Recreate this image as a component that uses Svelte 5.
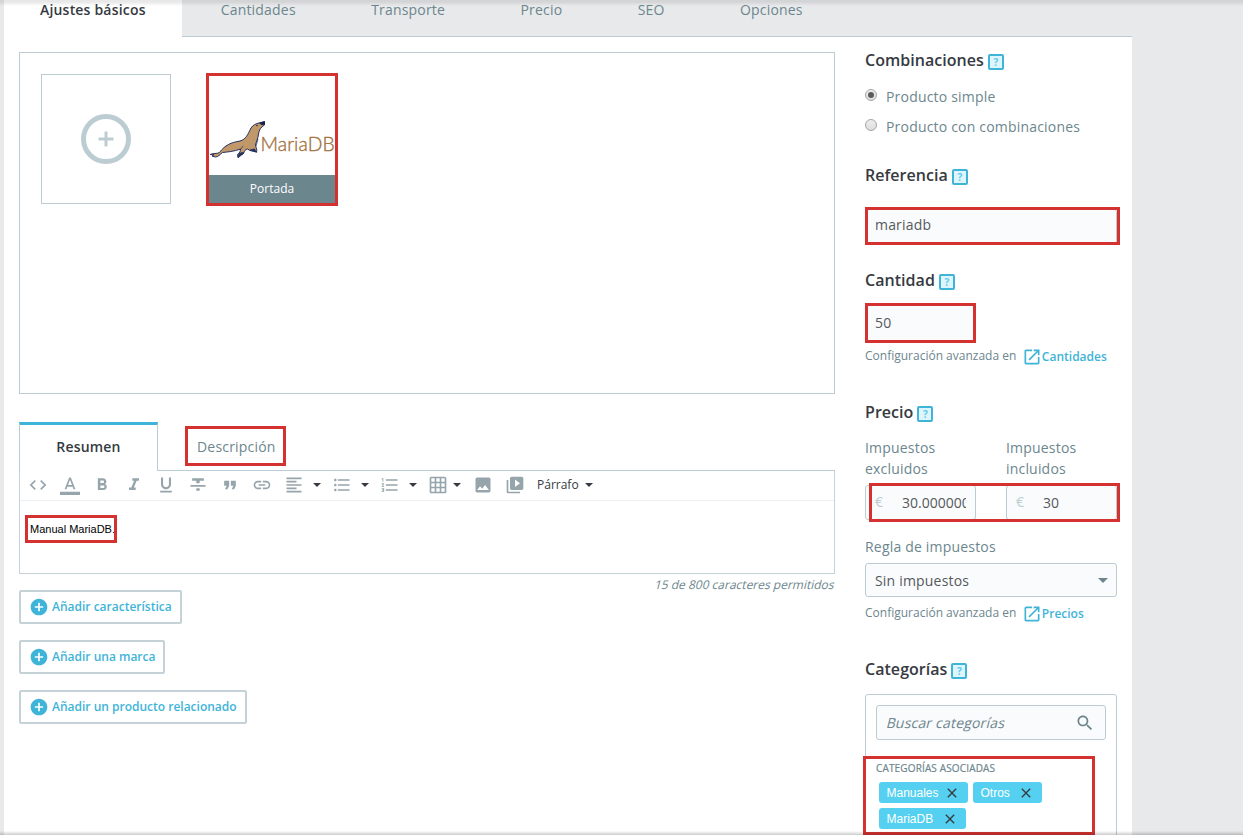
<script>
  const tabs = ['Ajustes básicos', 'Cantidades', 'Transporte', 'Precio', 'SEO', 'Opciones'];
  const tools = [
    { d: 'M9.4 16.6L4.8 12l4.6-4.6L8 6l-6 6 6 6 1.4-1.4zm5.2 0l4.6-4.6-4.6-4.6L16 6l6 6-6 6-1.4-1.4z' },
    { d: 'M0 20h24v4H0zM11 3L5.5 17h2.25l1.12-3h6.25l1.12 3h2.25L13 3h-2zm-1.38 9L12 5.67 14.38 12H9.62z' },
    { d: 'M15.6 10.79c.97-.67 1.65-1.77 1.65-2.79 0-2.26-1.75-4-4-4H7v14h7.04c2.09 0 3.71-1.7 3.71-3.79 0-1.52-.86-2.82-2.15-3.42zM10 6.5h3c.83 0 1.5.67 1.5 1.5s-.67 1.5-1.5 1.5h-3v-3zm3.5 9H10v-3h3.5c.83 0 1.5.67 1.5 1.5s-.67 1.5-1.5 1.5z' },
    { d: 'M10 4v3h2.21l-3.42 8H6v3h8v-3h-2.21l3.42-8H18V4z' },
    { d: 'M12 17c3.31 0 6-2.69 6-6V3h-2.5v8c0 1.93-1.57 3.5-3.5 3.5S8.5 12.93 8.5 11V3H6v8c0 3.31 2.69 6 6 6zm-7 2v2h14v-2H5z' },
    { d: 'M10 19h4v-3h-4v3zM5 4v3h5v3h4V7h5V4H5zM3 14h18v-2H3v2z' },
    { d: 'M6 17h3l2-4V7H5v6h3zm8 0h3l2-4V7h-6v6h3z' },
    { d: 'M3.9 12c0-1.71 1.39-3.1 3.1-3.1h4V7H7c-2.76 0-5 2.24-5 5s2.24 5 5 5h4v-1.9H7c-1.71 0-3.1-1.39-3.1-3.1zM8 13h8v-2H8v2zm9-6h-4v1.9h4c1.71 0 3.1 1.39 3.1 3.1s-1.39 3.1-3.1 3.1h-4V17h4c2.76 0 5-2.24 5-5s-2.24-5-5-5z' },
    { d: 'M15 15H3v2h12v-2zm0-8H3v2h12V7zM3 13h18v-2H3v2zm0 8h18v-2H3v2zM3 3v2h18V3H3z', w: 48 },
    { d: 'M4 10.5c-.83 0-1.5.67-1.5 1.5s.67 1.5 1.5 1.5 1.5-.67 1.5-1.5-.67-1.5-1.5-1.5zm0-6c-.83 0-1.5.67-1.5 1.5S3.17 7.5 4 7.5 5.5 6.83 5.5 6 4.83 4.5 4 4.5zm0 12c-.83 0-1.5.68-1.5 1.5s.68 1.5 1.5 1.5 1.5-.68 1.5-1.5-.67-1.5-1.5-1.5zM7 19h14v-2H7v2zm0-6h14v-2H7v2zm0-8v2h14V5H7z', w: 48 },
    { d: 'M2 17h2v.5H3v1h1v.5H2v1h3v-4H2v1zm1-9h1V4H2v1h1v3zm-1 3h1.8L2 13.1v.9h3v-1H3.2L5 10.9V10H2v1zm5-6v2h14V5H7zm0 14h14v-2H7v2zm0-6h14v-2H7v2z', w: 48 },
    { d: 'M20 2H4c-1.1 0-2 .9-2 2v16c0 1.1.9 2 2 2h16c1.1 0 2-.9 2-2V4c0-1.1-.9-2-2-2zM8 20H4v-4h4v4zm0-6H4v-4h4v4zm0-6H4V4h4v4zm6 12h-4v-4h4v4zm0-6h-4v-4h4v4zm0-6h-4V4h4v4zm6 12h-4v-4h4v4zm0-6h-4v-4h4v4zm0-6h-4V4h4v4z', w: 45 },
    { d: 'M21 19V5c0-1.1-.9-2-2-2H5c-1.1 0-2 .9-2 2v14c0 1.1.9 2 2 2h14c1.1 0 2-.9 2-2zM8.5 13.5l2.5 3.01L14.5 12l4.5 6H5l3.5-4.5z' },
    { d: 'M4 6H2v14c0 1.1.9 2 2 2h14v-2H4V6zm16-4H8c-1.1 0-2 .9-2 2v12c0 1.1.9 2 2 2h12c1.1 0 2-.9 2-2V4c0-1.1-.9-2-2-2zm-8 12.5v-9l6 4.5-6 4.5z' }
  ];
  const actions = ['Añadir característica', 'Añadir una marca', 'Añadir un producto relacionado'];
  const tags = [
    { name: 'Manuales', w: 89 },
    { name: 'Otros', w: 69 },
    { name: 'MariaDB', w: 87 }
  ];
</script>

{#snippet heading(text)}
  <h2>{text}<span class="help">?</span></h2>
{/snippet}

{#snippet advanced(target)}
  <p class="advanced">
    Configuración avanzada en
    <a href="#top"
      ><svg viewBox="0 0 24 24"
        ><path
          d="M19 19H5V5h7V3H5c-1.11 0-2 .9-2 2v14c0 1.1.89 2 2 2h14c1.1 0 2-.9 2-2v-7h-2v7zM14 3v2h3.59l-9.83 9.83 1.41 1.41L19 6.41V10h2V3h-7z"
        /></svg
      >{target}</a>
  </p>
{/snippet}

<div class="page">
  <nav class="tabs">
    {#each tabs as tab, i}
      <div class="tab" class:active={i === 0}>{tab}</div>
    {/each}
  </nav>

  <div class="panel">
    <main>
      <section class="gallery">
        <div class="add-image"><div class="ring"><svg viewBox="0 0 16 16"><path d="M6.5.5h3v6h6v3h-6v6h-3v-6h-6v-3h6z" /></svg></div></div>
        <div class="cover">
          <svg class="logo" viewBox="0 0 126 99">
            <path
              d="M1 78.5C4 77 8 78 10.5 76.5C16 69 22 66.5 31 65C37 63.5 39 58 42 52C44 49 47 47.5 50 47L55.5 45.5L55.5 49C52 51 50 54 49.5 58C49 63 47 66 46.5 69C47 72 48.5 74 47.5 76L41 74.5L38.5 73C36 73.5 35.5 75 34.5 77.5C32.5 78.5 30.5 80 29 81.5L28.5 78.5C31 77 31.5 74.5 31.5 73C25 75.5 18 76 13.5 76.5C11 78.5 9 81 6.5 81L3 80L5 78.8Z"
              fill="#c0986a"
              stroke="#26305f"
              stroke-width="1"
              stroke-linejoin="round"
            />
            <path d="M50 47l5.8-1.8v3.2l-2.8.8z" fill="#15204c" />
            <path d="M35 77l-6 4.8 1-4 3-1.5zM41 74l6.8 2.3-2.5-3.5zM31 74l3.2-4M47 70l2-7" fill="#26305f" stroke="#26305f" stroke-width=".7" />
            <circle cx="48" cy="49.5" r=".8" fill="#1a224a" />
            <text x="51.5" y="75">MariaDB</text>
          </svg>
          <div class="caption">Portada</div>
          <i class="mark mark-cover"></i>
        </div>
      </section>

      <div class="editor-tabs">
        <div class="etab on">Resumen</div>
        <div class="etab">Descripción<i class="mark mark-desc"></i></div>
      </div>
      <section class="editor">
        <div class="toolbar">
          {#each tools as tool}
            <div class="tool" style="width: {tool.w ?? 32}px">
              <svg viewBox="0 0 24 24"><path d={tool.d} /></svg>
              {#if tool.w}<b class="caret" class:tight={tool.w === 45}></b>{/if}
            </div>
          {/each}
          <div class="format">Párrafo<b class="caret"></b></div>
        </div>
        <div class="content"><span>Manual MariaDB.<i class="mark mark-text"></i></span></div>
      </section>
      <p class="counter"><span class="slant">15 de 800 caracteres permitidos</span></p>

      <div class="actions">
        {#each actions as action}
          <button
            ><svg viewBox="0 0 24 24"
              ><path d="M12 2C6.48 2 2 6.48 2 12s4.48 10 10 10 10-4.48 10-10S17.52 2 12 2zm5 11h-4v4h-2v-4H7v-2h4V7h2v4h4v2z" /></svg
            >{action}</button>
        {/each}
      </div>
    </main>

    <aside>
      {@render heading('Combinaciones')}
      <div class="radio first"><span class="dot checked"></span>Producto simple</div>
      <div class="radio"><span class="dot"></span>Producto con combinaciones</div>

      <div class="group reference">
        {@render heading('Referencia')}
        <div class="field">mariadb<i class="mark mark-ref"></i></div>
      </div>

      <div class="group quantity">
        {@render heading('Cantidad')}
        <div class="field small">50<i class="mark mark-qty"></i></div>
        {@render advanced('Cantidades')}
      </div>

      <div class="group price">
        {@render heading('Precio')}
        <div class="prices">
          <div><label for="net">Impuestos excluidos</label><div class="money" id="net"><em>€</em><span>30.000000</span></div></div>
          <div><label for="gross">Impuestos incluidos</label><div class="money" id="gross"><em>€</em><span>30</span></div></div>
          <i class="mark mark-price"></i>
        </div>
        <div class="rule">Regla de impuestos</div>
        <div class="field select">Sin impuestos<b class="caret"></b></div>
        {@render advanced('Precios')}
      </div>

      <div class="group categories">
        {@render heading('Categorías')}
        <div class="catbox">
          <div class="search">
            <span class="slant">Buscar categorías</span>
            <svg viewBox="0 0 24 24"><path d="M15.5 14h-.79l-.28-.27C15.41 12.59 16 11.11 16 9.5 16 5.91 13.09 3 9.5 3S3 5.91 3 9.5 5.91 16 9.5 16c1.61 0 3.09-.59 4.23-1.57l.27.28v.79l5 4.99L20.49 19l-4.99-5zm-6 0C7.01 14 5 11.99 5 9.5S7.01 5 9.5 5 14 7.01 14 9.5 11.99 14 9.5 14z" /></svg>
          </div>
          <div class="assoc">CATEGORÍAS ASOCIADAS</div>
          <div class="tags">
            {#each tags as tag}
              <span class="tag" style="width: {tag.w}px"
                >{tag.name}<svg viewBox="0 0 24 24"
                  ><path d="M19 6.41L17.59 5 12 10.59 6.41 5 5 6.41 10.59 12 5 17.59 6.41 19 12 13.41 17.59 19 19 17.59 13.41 12z" /></svg
                ></span>
            {/each}
          </div>
          <i class="mark mark-cat"></i>
        </div>
      </div>
    </aside>
  </div>
  <div class="shade top"></div>
  <div class="shade bottom"></div>
</div>

<style>
  :global(body) { margin: 0; background: #e8e9eb; overflow: hidden; }
  .page, .page * { box-sizing: border-box; }
  .page {
    position: relative; width: 1243px; height: 835px; padding-left: 4px; overflow: hidden;
    background: #e8e9eb; color: #6c868e; font: 14px/21px "Open Sans", "Noto Sans", sans-serif; letter-spacing: .19px;
  }
  .mark { position: absolute; border: 3px solid #d33231; pointer-events: none; z-index: 2; }
  svg { display: block; fill: currentColor; }
  p, h2 { margin: 0; }
  .slant { display: inline-block; transform: skewX(-14deg); }
  .tabs { display: flex; width: 1128px; height: 37px; border-bottom: 1px solid #bbcdd2; }
  .tab { height: 36px; padding: 0 37.7px; line-height: 20px; }
  .tab.active { width: 178px; height: 37px; padding: 0 0 0 36px; margin-right: 1px; background: #fff; color: #363a41; font-weight: 600; white-space: nowrap; }
  .panel { display: flex; width: 1128px; height: 798px; padding: 0 15px; background: #fff; }
  main { width: 816px; margin-right: 30px; padding-top: 15px; flex: none; }
  .gallery { display: flex; gap: 35px; height: 342px; border: 1px solid #bbcdd2; padding: 21px; }
  .add-image { display: flex; align-items: center; justify-content: center; width: 130px; height: 130px; border: 1px solid #bbcdd2; }
  .ring { display: flex; align-items: center; justify-content: center; width: 50px; height: 50px; border: 5px solid #bbcdd2; border-radius: 50%; color: #bbcdd2; }
  .ring svg { width: 16px; height: 16px; }
  .cover { position: relative; width: 132px; height: 132px; padding: 2px 3px 3px; }
  .logo { width: 126px; height: 99px; overflow: hidden; }
  .logo text { font: 300 19.3px "Lato", sans-serif; fill: #a1703c; stroke: #a1703c; stroke-width: .35px; letter-spacing: .1px; }
  .caption { height: 28px; background: #6c868e; color: #fff; font-size: 12px; line-height: 27px; text-align: center; letter-spacing: 0; }
  .mark-cover { inset: -1px 0 0; }
  .editor-tabs { display: flex; height: 49px; margin-top: 28px; }
  .etab { position: relative; padding: 0 0 0 39px; line-height: 50px; border-bottom: 1px solid #bbcdd2; flex: 1; }
  .etab.on { flex: none; width: 139px; padding: 0; border: 1px solid #bbcdd2; border-width: 3px 1px 0; border-top-color: #3eb4d8; color: #363a41; font-weight: 600; text-align: center; line-height: 44px; }
  .mark-desc { left: 27px; top: 4px; width: 101px; height: 40px; }
  .editor { height: 103px; border: 1px solid #c5d2d8; border-top: 0; }
  .toolbar { display: flex; align-items: center; height: 30px; padding: 0 0 1px 8px; border-bottom: 1px solid #eceeef; color: #95a5ab; }
  .tool { display: flex; align-items: center; }
  .tool svg { width: 20px; height: 20px; flex: none; margin-top: -1px; }
  .caret { width: 0; height: 0; margin-left: 9px; border: 4px solid transparent; border-top-color: #363a41; border-bottom: 0; }
  .caret.tight { margin-left: 5px; }
  .format { display: flex; align-items: center; color: #363a41; font-size: 12px; letter-spacing: 0; margin-top: -1px; }
  .format .caret { margin-left: 6px; }
  .content { padding: 21px 0 0 10px; color: #000; font: 11px/14px "Liberation Sans", Arial, sans-serif; letter-spacing: 0; }
  .content span { position: relative; display: inline-block; }
  .mark-text { left: -5px; top: -7px; width: 92px; height: 28px; }
  .counter { height: 17px; text-align: right; font-size: 12px; line-height: 17px; margin-top: 2px; letter-spacing: 0; }
  .actions { display: flex; flex-direction: column; align-items: flex-start; gap: 16px; margin-top: -3px; }
  button { display: flex; align-items: center; height: 34px; padding: 0 8px 0 9px; border: 2px solid #c5d3d9; border-radius: 2px; background: #fff; color: #3eb4d8; font: 600 12px/18px "Open Sans", sans-serif; white-space: nowrap; }
  button svg { width: 20px; height: 20px; margin: 0 3px 0 -1px; }
  aside { width: 252px; flex: none; padding-top: 12px; }
  h2 { display: flex; height: 22px; align-items: center; color: #363a41; font-size: 16px; line-height: 22px; font-weight: 600; letter-spacing: .04px; }
  .help { width: 16px; height: 16px; margin: 4px 0 0 4px; border: 2px solid #3eb4d8; border-radius: 2px; background: #dff5fc; color: #5bcdee; font-size: 10px; line-height: 12px; text-align: center; font-weight: 700; }
  .radio { display: flex; align-items: center; height: 30px; }
  .radio.first { margin-top: 10px; }
  .dot { display: flex; align-items: center; justify-content: center; width: 12px; height: 12px; margin: -3px 9px 0 0; border: 1px solid #a5a5a5; border-radius: 50%; background: linear-gradient(#eee, #ddd); }
  .dot.checked::after { content: ''; width: 6px; height: 6px; border-radius: 50%; background: #5b5b5b; }
  .field { position: relative; height: 35px; padding-left: 9px; border: 1px solid #bbcdd2; border-radius: 3px; background: #fafbfc; color: #55595c; line-height: 30px; }
  .reference { margin-top: 23px; }
  .reference .field { margin-top: 23px; }
  .mark-ref { left: -1px; top: -3px; width: 255px; height: 38px; }
  .quantity { margin-top: 25px; }
  .quantity .field { margin-top: 14px; }
  .small { width: 110px; height: 36px; line-height: 34px; }
  .mark-qty { left: -1px; top: -3px; width: 111px; height: 40px; }
  .advanced { display: flex; align-items: center; height: 18px; margin-top: 6px; font-size: 12px; line-height: 18px; white-space: nowrap; letter-spacing: 0; }
  .advanced a { display: flex; align-items: center; margin: 1px 0 0 6px; color: #3eb4d8; font-weight: 600; text-decoration: none; }
  .advanced svg { width: 20px; height: 20px; margin: 1px -.5px 0 0; }
  .price { margin-top: 36px; }
  .prices { position: relative; display: flex; gap: 30px; margin-top: 14px; }
  .prices > div { width: 111px; }
  .prices label { display: block; height: 42px; width: 90px; }
  .money { display: flex; height: 35px; margin-top: 6px; border: 1px solid #bbcdd2; border-radius: 3px; background: #fafbfc; color: #55595c; line-height: 34px; }
  .money em { width: 36px; padding-left: 9px; color: #bbcdd2; font-style: normal; line-height: 32px; }
  .money span { width: 64px; overflow: hidden; letter-spacing: 0; }
  .mark-price { left: 4px; bottom: -2px; width: 251px; height: 39px; }
  .rule { margin-top: 16px; }
  .select { display: flex; align-items: center; justify-content: space-between; height: 34px; margin-top: 6px; padding: 1px 8px 0 9px; }
  .select .caret { border-width: 5px 5px 0; border-top-color: #6c868e; }
  .select + :global(.advanced) { margin-top: 7px; }
  .categories { margin-top: 36px; }
  .catbox { position: relative; height: 160px; margin-top: 14px; padding: 10px; border: 1px solid #bbcdd2; border-radius: 3px; }
  .search { display: flex; align-items: center; justify-content: space-between; height: 35px; padding: 0 10px; border: 1px solid #bbcdd2; border-radius: 3px; background: #fafbfc; }
  .search svg { width: 20px; height: 20px; }
  .assoc { margin-top: 20px; font-size: 10px; line-height: 16px; letter-spacing: .15px; -webkit-text-stroke: .2px currentColor; }
  .tags { display: flex; flex-wrap: wrap; gap: 5px; width: 200px; margin: 6px 0 0 3px; }
  .tag { display: flex; align-items: center; justify-content: space-between; height: 21px; padding: 0 8.5px 0 7.5px; border-radius: 3px; background: #55d0f1; color: #fff; font: 12px/22px "Liberation Sans", Arial, sans-serif; letter-spacing: 0; }
  .tag svg { width: 16px; height: 16px; color: #363a41; }
  .mark-cat { left: -3px; top: 61px; width: 232px; height: 79px; }
  .shade { position: absolute; left: 0; right: 0; z-index: 3; }
  .top { top: 0; height: 6px; background: linear-gradient(rgba(0, 0, 0, .09) 30%, rgba(0, 0, 0, 0)); }
  .bottom { bottom: 0; height: 4px; background: linear-gradient(rgba(0, 0, 0, 0), rgba(0, 0, 0, .2)); }
</style>
